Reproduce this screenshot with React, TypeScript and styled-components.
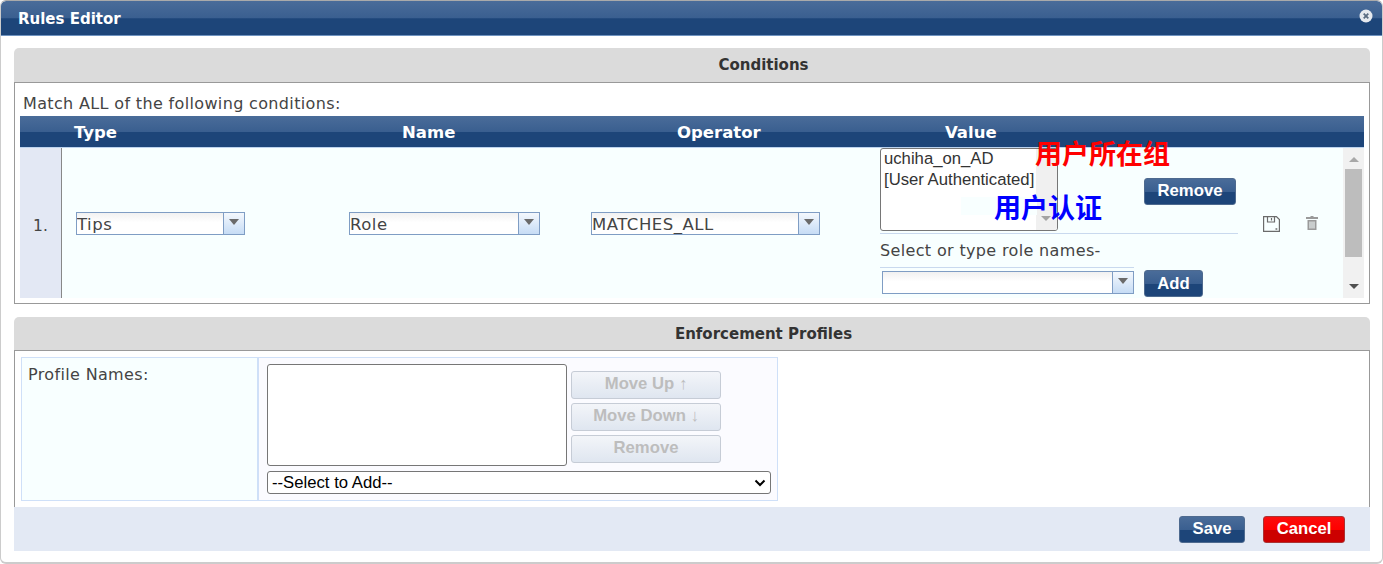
import styled, { createGlobalStyle } from "styled-components";

const GlobalStyle = createGlobalStyle`
  html, body {
    margin: 0;
    padding: 0;
    background: #fff;
  }
  * { box-sizing: border-box; }
`;

const navy = "linear-gradient(to bottom, #4a6c99 0%, #3a5f90 50%, #1d4579 52%, #1d4579 100%)";

const Modal = styled.div`
  width: 1383px;
  height: 564px;
  overflow: hidden;
  position: relative;
  background: #fff;
  border-top: 1px solid #aaa;
  border-left: 1px solid #ccc;
  border-right: 1px solid #ccc;
  border-bottom: 2px solid #ccc;
  border-radius: 6px;
  font-family: "DejaVu Sans", Verdana, sans-serif;
  color: #444;
`;

const TitleBar = styled.div`
  height: 35px;
  margin: 0 -1px;
  padding: 2px 0 0 18px;
  background: ${navy};
  border-bottom: 1px solid #6f93c0;
  display: flex;
  align-items: center;
  justify-content: space-between;
  color: #fff;
  font-size: 15px;
  font-weight: bold;
  border-radius: 6px 6px 0 0;
`;

const CloseIcon = styled.svg`
  width: 14px;
  height: 14px;
  margin: -7px 10px 0 0;
`;

const Content = styled.div`
  padding: 12px 12px 0 13px;
`;

const SectionTitle = styled.div<{ $height: number }>`
  height: ${(p) => p.$height}px;
  background: #dbdbdb;
  border-radius: 5px 5px 0 0;
  display: flex;
  align-items: center;
  justify-content: center;
  font-size: 15px;
  font-weight: bold;
  color: #333;
  padding: 0 0 0 143px;
`;

const ConditionsBox = styled.div`
  height: 222px;
  border: 1px solid #999;
  padding: 10px 5px 0 5px;
  margin-bottom: 13px;
`;

const MatchText = styled.div`
  font-size: 16px;
  letter-spacing: 0.35px;
  line-height: 22px;
  height: 23px;
  padding-left: 3px;
  color: #444;
  white-space: nowrap;
`;

const gridColumns = "42px 287px 242px 289px 463px 21px";

const TableHead = styled.div`
  display: grid;
  grid-template-columns: ${gridColumns};
  height: 32px;
  align-items: center;
  background: ${navy};
  border-bottom: 1px solid #bcd3ee;
  color: #fff;
  font-size: 16.5px;
  font-weight: bold;
  padding-top: 2px;
`;

const HeadCell = styled.div<{ $pad: number }>`
  padding-left: ${(p) => p.$pad}px;
`;

const Row = styled.div`
  display: grid;
  grid-template-columns: ${gridColumns};
  height: 150px;
  background: #f8ffff;
`;

const NumberCell = styled.div`
  background: #e3e8f4;
  border-right: 1px solid #888;
  display: flex;
  align-items: center;
  justify-content: center;
  font-size: 15.5px;
  color: #444;
  padding-top: 5px;
`;

const SelectCell = styled.div<{ $pad: number }>`
  display: flex;
  align-items: center;
  padding: 1px 0 0 ${(p) => p.$pad}px;
`;

const Combo = styled.div<{ $width: number }>`
  width: ${(p) => p.$width}px;
  height: 23px;
  border: 1px solid #7f9dc4;
  background: linear-gradient(to bottom, #f1f1f1 0%, #fff 45%);
  display: flex;
  align-items: center;
  justify-content: space-between;
  font-size: 16.5px;
  letter-spacing: 0.5px;
  line-height: 21px;
  color: #444;
  overflow: hidden;
`;

const ComboText = styled.span`
  padding-top: 2px;
  white-space: nowrap;
`;

const ComboArrow = styled.span`
  width: 21px;
  height: 100%;
  background: linear-gradient(to bottom, #f4f8fd 0%, #c6dcf5 100%);
  border-left: 1px solid #7f9dc4;
  display: flex;
  align-items: center;
  justify-content: center;
  &::after {
    content: "";
    border-left: 5px solid transparent;
    border-right: 5px solid transparent;
    border-top: 6px solid #6a6a6a;
    margin-top: -3px;
  }
`;

const ValueCell = styled.div`
  display: grid;
  grid-template-columns: 264px 99px;
  grid-template-rows: 83px auto auto;
  position: relative;
`;

const ListBox = styled.div`
  width: 178px;
  height: 83px;
  border: 1px solid #767676;
  border-radius: 3px;
  background: #fff;
  font-family: "Liberation Sans", Arial, sans-serif;
  font-size: 16.7px;
  line-height: 21px;
  color: #333;
  padding: 0 0 0 3px;
  position: relative;
  overflow: hidden;
`;

const ListItem = styled.div`
  white-space: nowrap;
  margin-top: -1px;
  margin-bottom: 1px;
`;

const ListTrack = styled.div`
  position: absolute;
  top: 0;
  right: 0;
  bottom: 0;
  width: 21px;
  background: #f0f0f0;
  &::after {
    content: "";
    position: absolute;
    bottom: 9px;
    left: 5px;
    border-left: 5px solid transparent;
    border-right: 5px solid transparent;
    border-top: 5px solid #a3a3a3;
  }
`;

const PastePatch = styled.div`
  position: absolute;
  left: 80px;
  top: 48px;
  width: 76px;
  height: 18px;
  background: #f8ffff;
`;

const RemoveWrap = styled.div`
  padding: 30px 0 0 0;
`;

const DarkButton = styled.button<{ $width: number }>`
  width: ${(p) => p.$width}px;
  height: 27px;
  padding: 0;
  border: 1px solid #4e6a8f;
  border-radius: 3px;
  background: ${navy};
  color: #fff;
  font-family: "Liberation Sans", Arial, sans-serif;
  font-size: 16.7px;
  font-weight: bold;
`;

const RemoveButton = styled(DarkButton)`
  padding-bottom: 2px;
`;

const Divider = styled.div`
  grid-column: 1 / span 2;
  width: 358px;
  height: 1px;
  margin-top: 2px;
  background: #c9d9ee;
`;

const RoleBlock = styled.div`
  grid-column: 1 / span 2;
`;

const RoleLabel = styled.div`
  width: 254px;
  height: 33px;
  padding-top: 6px;
  border-bottom: 1px solid #c9d9ee;
  font-size: 16px;
  letter-spacing: 0.35px;
  line-height: 20px;
  color: #444;
  white-space: nowrap;
`;

const AddRow = styled.div`
  display: flex;
  align-items: flex-start;
  gap: 10px;
  padding: 2px 0 0 0;
`;

const AddCombo = styled.div`
  margin: 1px 0 0 2px;
`;

const RedNote = styled.div`
  position: absolute;
  left: 155px;
  top: -11px;
  font-family: "Noto Sans CJK SC", sans-serif;
  font-size: 27px;
  line-height: 32px;
  font-weight: bold;
  color: #ff0000;
  white-space: nowrap;
`;

const BlueNote = styled(RedNote)`
  left: 114px;
  top: 43px;
  color: #0000ff;
`;

const ActionIcons = styled.div`
  position: absolute;
  left: 383px;
  top: 68px;
  display: flex;
  align-items: flex-start;
  gap: 26px;
`;

const ScrollBar = styled.div`
  background: #f1f1f1;
  display: flex;
  flex-direction: column;
  align-items: center;
  justify-content: space-between;
  padding: 9px 2px 9px;
`;

const ScrollThumb = styled.div`
  width: 17px;
  height: 88px;
  margin: 7px 0 auto;
  background: #bdbdbd;
`;

const ScrollUp = styled.div`
  border-left: 5px solid transparent;
  border-right: 5px solid transparent;
  border-bottom: 5px solid #a8a8a8;
`;

const ScrollDown = styled.div`
  border-left: 5px solid transparent;
  border-right: 5px solid transparent;
  border-top: 5px solid #505050;
`;

const ProfilesBox = styled.div`
  height: 157px;
  border: 1px solid #999;
  border-bottom: none;
  padding: 6px 6px 0 6px;
`;

const ProfileTable = styled.div`
  display: grid;
  grid-template-columns: 236px 1fr;
  width: 757px;
  height: 144px;
  border: 1px solid #cfe0f8;
`;

const ProfileLabel = styled.div`
  background: #f8ffff;
  border-right: 1px solid #cfe0f8;
  padding: 7px 0 0 6px;
  font-size: 16px;
  letter-spacing: 0.35px;
  line-height: 20px;
  color: #444;
`;

const ProfileBody = styled.div`
  background: #fbfbff;
  border-left: 1px solid #cfe0f8;
  padding: 6px 0 0 8px;
`;

const ProfileTop = styled.div`
  display: flex;
  gap: 4px;
  margin-bottom: 5px;
`;

const ProfileList = styled.div`
  width: 300px;
  height: 102px;
  border: 1px solid #767676;
  border-radius: 3px;
  background: #fff;
`;

const MoveButtons = styled.div`
  display: flex;
  flex-direction: column;
  gap: 4px;
  padding-top: 7px;
`;

const DisabledButton = styled.button`
  width: 150px;
  height: 28px;
  padding: 0 0 2px;
  border: 1px solid #c6ccd6;
  border-radius: 3px;
  background: linear-gradient(to bottom, #f3f5f9 0%, #dfe6f0 100%);
  color: #bdbdbd;
  font-family: "Liberation Sans", Arial, sans-serif;
  font-size: 16.7px;
  font-weight: bold;
`;

const SelectWrap = styled.div`
  position: relative;
  width: 504px;
  height: 23px;
`;

const AddSelect = styled.select`
  display: block;
  width: 100%;
  height: 100%;
  appearance: none;
  border: 1px solid #767676;
  border-radius: 3px;
  background: #fff;
  color: #000;
  font-family: "Liberation Sans", Arial, sans-serif;
  font-size: 16.7px;
  padding: 0 0 0 4px;
`;

const SelectChevron = styled.svg`
  position: absolute;
  right: 5px;
  top: 8px;
  width: 12px;
  height: 8px;
  pointer-events: none;
`;

const Footer = styled.div`
  height: 44px;
  background: #e3e9f4;
  display: flex;
  justify-content: flex-end;
  align-items: center;
  gap: 18px;
  padding: 0 25px 0 0;
`;

const CancelButton = styled(DarkButton)`
  border-color: #a33;
  background: linear-gradient(to bottom, #fa0d0d 0%, #f00 50%, #cc0000 52%, #cc0000 100%);
`;

const SaveIcon = () => (
  <svg width="17" height="16" viewBox="0 0 17 16" fill="none" stroke="#6b6b6b" strokeWidth="1.2">
    <path d="M.6.6h12.8l3 3v11.8H.6z" />
    <path d="M4.5.6v5.4h7V.6M8.5 2v2.6" />
    <path d="M12.5 13h1.8" strokeWidth="1.4" />
  </svg>
);

const TrashIcon = () => (
  <svg width="12" height="14" viewBox="0 0 12 14" fill="#9a9a9a">
    <path d="M4.5 0h3v1h4.5v2H0V1h4.5z" />
    <path d="M1.5 4h9v10h-9zM3.5 5.5v7h1v-7zM5.5 5.5v7h1v-7zM7.5 5.5v7h1v-7z" fillRule="evenodd" />
  </svg>
);

export default function App() {
  return (
    <>
      <GlobalStyle />
      <Modal>
        <TitleBar>
          Rules Editor
          <CloseIcon viewBox="0 0 14 14">
            <circle cx="7" cy="7" r="6.5" fill="#e6e9ee" />
            <path d="M4.7 4.7l4.6 4.6M9.3 4.7l-4.6 4.6" stroke="#5a6b80" strokeWidth="1.8" />
          </CloseIcon>
        </TitleBar>
        <Content>
          <SectionTitle $height={34}>Conditions</SectionTitle>
          <ConditionsBox>
            <MatchText>Match ALL of the following conditions:</MatchText>
            <TableHead>
              <div />
              <HeadCell $pad={12}>Type</HeadCell>
              <HeadCell $pad={53}>Name</HeadCell>
              <HeadCell $pad={86}>Operator</HeadCell>
              <HeadCell $pad={65}>Value</HeadCell>
              <div />
            </TableHead>
            <Row>
              <NumberCell>1.</NumberCell>
              <SelectCell $pad={14}>
                <Combo $width={169}>
                  <ComboText>Tips</ComboText>
                  <ComboArrow />
                </Combo>
              </SelectCell>
              <SelectCell $pad={0}>
                <Combo $width={191}>
                  <ComboText>Role</ComboText>
                  <ComboArrow />
                </Combo>
              </SelectCell>
              <SelectCell $pad={0}>
                <Combo $width={229}>
                  <ComboText>MATCHES_ALL</ComboText>
                  <ComboArrow />
                </Combo>
              </SelectCell>
              <ValueCell>
                <ListBox>
                  <ListItem>uchiha_on_AD</ListItem>
                  <ListItem>[User Authenticated]</ListItem>
                  <ListTrack />
                  <PastePatch />
                </ListBox>
                <RemoveWrap>
                  <RemoveButton $width={92}>Remove</RemoveButton>
                </RemoveWrap>
                <Divider />
                <RoleBlock>
                  <RoleLabel>Select or type role names-</RoleLabel>
                  <AddRow>
                    <AddCombo>
                      <Combo $width={252}>
                        <ComboText />
                        <ComboArrow />
                      </Combo>
                    </AddCombo>
                    <DarkButton $width={59}>Add</DarkButton>
                  </AddRow>
                </RoleBlock>
                <RedNote>用户所在组</RedNote>
                <BlueNote>用户认证</BlueNote>
                <ActionIcons>
                  <SaveIcon />
                  <TrashIcon />
                </ActionIcons>
              </ValueCell>
              <ScrollBar>
                <ScrollUp />
                <ScrollThumb />
                <ScrollDown />
              </ScrollBar>
            </Row>
          </ConditionsBox>
          <SectionTitle $height={33}>Enforcement Profiles</SectionTitle>
          <ProfilesBox>
            <ProfileTable>
              <ProfileLabel>Profile Names:</ProfileLabel>
              <ProfileBody>
                <ProfileTop>
                  <ProfileList />
                  <MoveButtons>
                    <DisabledButton disabled>Move Up ↑</DisabledButton>
                    <DisabledButton disabled>Move Down ↓</DisabledButton>
                    <DisabledButton disabled>Remove</DisabledButton>
                  </MoveButtons>
                </ProfileTop>
                <SelectWrap>
                  <AddSelect defaultValue="">
                    <option value="">--Select to Add--</option>
                  </AddSelect>
                  <SelectChevron viewBox="0 0 12 8">
                    <path d="M1.5 1.5L6 6l4.5-4.5" fill="none" stroke="#000" strokeWidth="2" />
                  </SelectChevron>
                </SelectWrap>
              </ProfileBody>
            </ProfileTable>
          </ProfilesBox>
          <Footer>
            <DarkButton $width={66}>Save</DarkButton>
            <CancelButton $width={82}>Cancel</CancelButton>
          </Footer>
        </Content>
      </Modal>
    </>
  );
}
